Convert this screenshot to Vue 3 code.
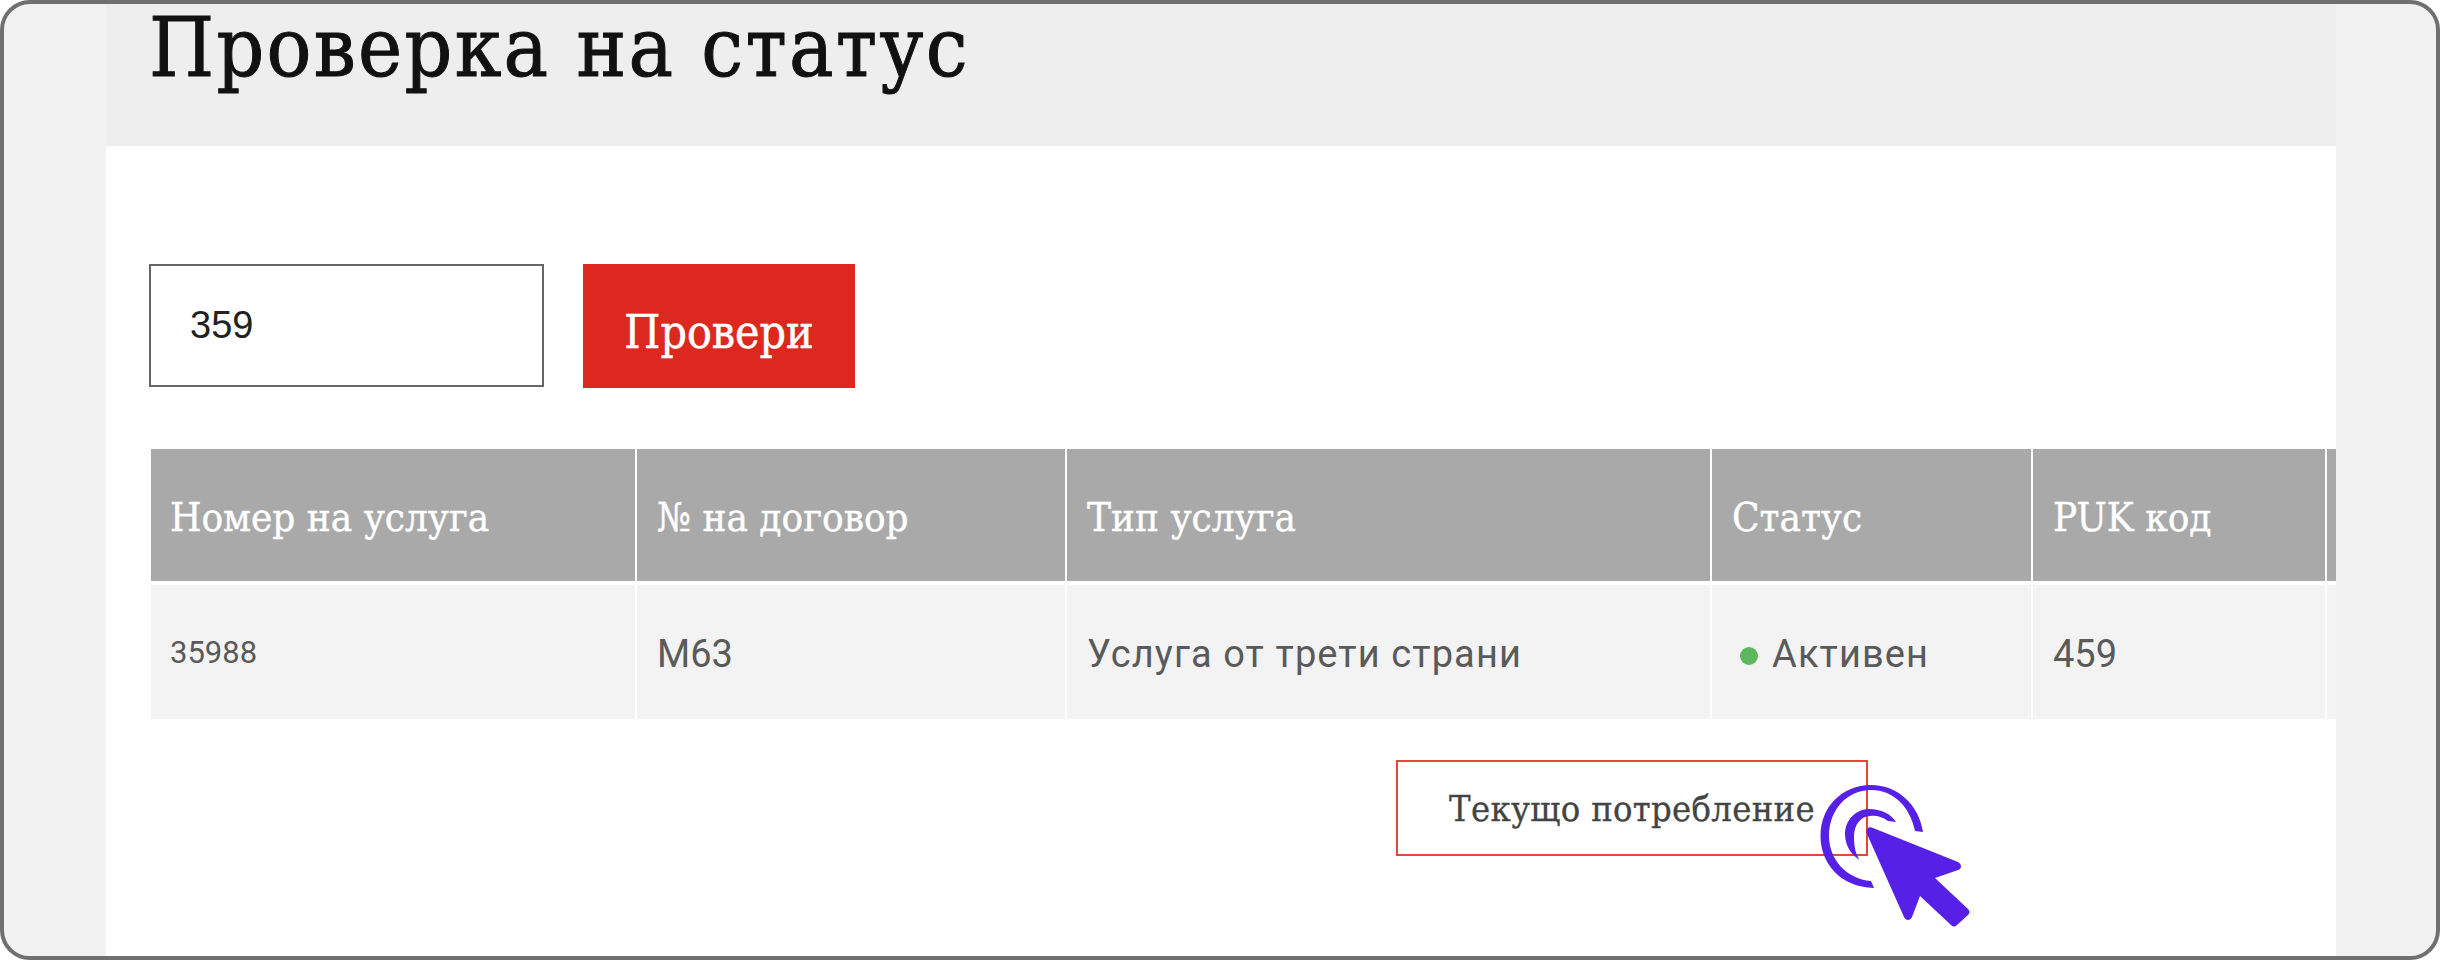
<script setup>
const heads = ['Номер на услуга', '№ на договор', 'Тип услуга', 'Статус', 'PUK код', '']
const widths = [486, 430, 645, 321, 294, 40]
</script>

<template>
  <div class="frame" lang="bg">
    <main class="panel">
      <header class="head">
        <h1 class="title">Проверка на статус</h1>
      </header>
      <section class="body">
        <form class="search" @submit.prevent>
          <div class="field">359</div>
          <button class="check" type="button">Провери</button>
        </form>
        <table class="grid">
          <colgroup>
            <col v-for="(w, i) in widths" :key="i" :style="{ width: w + 'px' }" />
          </colgroup>
          <thead>
            <tr><th v-for="(h, i) in heads" :key="i">{{ h }}</th></tr>
          </thead>
          <tbody>
            <tr>
              <td class="small">35988</td>
              <td class="code">M63</td>
              <td class="word">Услуга от трети страни</td>
              <td class="word"><span class="dot"></span>Активен</td>
              <td class="code">459</td>
              <td></td>
            </tr>
          </tbody>
        </table>
        <div class="action">
          <button class="usage" type="button">Текущо потребление</button>
          <svg class="cursor" viewBox="0 0 170 170" aria-hidden="true">
            <path class="mark" d="M64 109 C30 108 10.5 84 10.5 57 C10.5 28 32 6 61 6 C88 6 109 26 113 53 L105 52 C100 28 84 11 61 11 C37 11 19 31 19 57 C19 80 36 100 61 102 Z" />
            <path class="mark" d="M49.5 81 C40 75 35 65 35 55 C35 41 46 30 59 30 C71 30 81 35 86 43 L78 42 C73 38 66 36 60 37 C51 37 44 46 44 57 C44 66 45 74 49.5 81 Z" />
            <path class="mark" d="M57 55 C55 50 59 47 63 49 L148 83 C152 85 152 90 148 91 L125 99 L158 130 C160 132 160 134 158 136 L147 146 C145 148 143 148 141 146 L110 117 L102 138 C100 142 96 142 94 138 Z" />
          </svg>
        </div>
      </section>
    </main>
  </div>
</template>

<style>
html, body { margin: 0; background: #fff; }
</style>

<style scoped>
.frame {
  box-sizing: border-box;
  width: 2440px;
  height: 960px;
  border: 4px solid #707070;
  border-radius: 30px;
  background: #f2f2f2;
  overflow: hidden;
  padding: 0 100px 0 102px;
}
.panel { height: 100%; background: #fff; overflow: hidden; }
.head { height: 142px; background: #eee; padding-left: 43px; box-sizing: border-box; }
.title {
  margin: 0;
  font: 400 83px/88px "DejaVu Serif Condensed", "DejaVu Serif", serif;
  letter-spacing: 2.3px;
  -webkit-text-stroke: 1px #111;
  color: #111;
  white-space: nowrap;
}
.body { padding: 118px 0 0 43px; }
.search { display: flex; gap: 39px; }
.field {
  box-sizing: border-box;
  width: 395px;
  height: 123px;
  border: 2px solid #666;
  padding: 37px 0 0 39px;
  font: 38px/44px "Liberation Sans", sans-serif;
  color: #222;
}
.check {
  width: 272px;
  height: 124px;
  border: 0;
  background: #dc281e;
  color: #fff;
  font: 46px "DejaVu Serif Condensed", "DejaVu Serif", serif;
  -webkit-text-stroke: 0.5px #fff;
  padding: 12px 0 0;
}
.grid {
  margin: 61px 0 0 2px;
  width: 2216px;
  table-layout: fixed;
  border-collapse: separate;
  border-spacing: 0;
}
th {
  height: 136px;
  box-sizing: border-box;
  background: #a9a9a9;
  color: #fff;
  text-align: left;
  font: 400 40px "DejaVu Serif Condensed", "DejaVu Serif", serif;
  -webkit-text-stroke: 0.4px #fff;
  padding: 4px 0 0 20px;
  border-right: 2px solid #fff;
  border-bottom: 4px solid #fff;
  white-space: nowrap;
}
th:first-child { padding-left: 19px; }
td {
  height: 134px;
  box-sizing: border-box;
  background: #f3f3f3;
  color: #5a5a5a;
  font: 38px Roboto, sans-serif;
  padding: 4px 0 0 20px;
  border-right: 2px solid #fff;
  white-space: nowrap;
}
td.small { font-size: 31px; padding: 0 0 0 19px; }
td.word { letter-spacing: 1.1px; }
.dot {
  display: inline-block;
  width: 18px;
  height: 18px;
  border-radius: 50%;
  background: #5cb85c;
  margin: 0 14px 0 8px;
  vertical-align: 2px;
}
.action { position: relative; margin: 41px 0 0 1247px; width: 472px; height: 96px; }
.usage {
  box-sizing: border-box;
  width: 472px;
  height: 96px;
  border: 2px solid #e5463c;
  background: #fff;
  color: #444;
  font: 36px "DejaVu Serif Condensed", "DejaVu Serif", serif;
  letter-spacing: 0.3px;
  -webkit-text-stroke: 0.3px #444;
}
.cursor { position: absolute; left: 414px; top: 19px; width: 170px; height: 170px; }
.mark { fill: #5720e6; }
</style>
